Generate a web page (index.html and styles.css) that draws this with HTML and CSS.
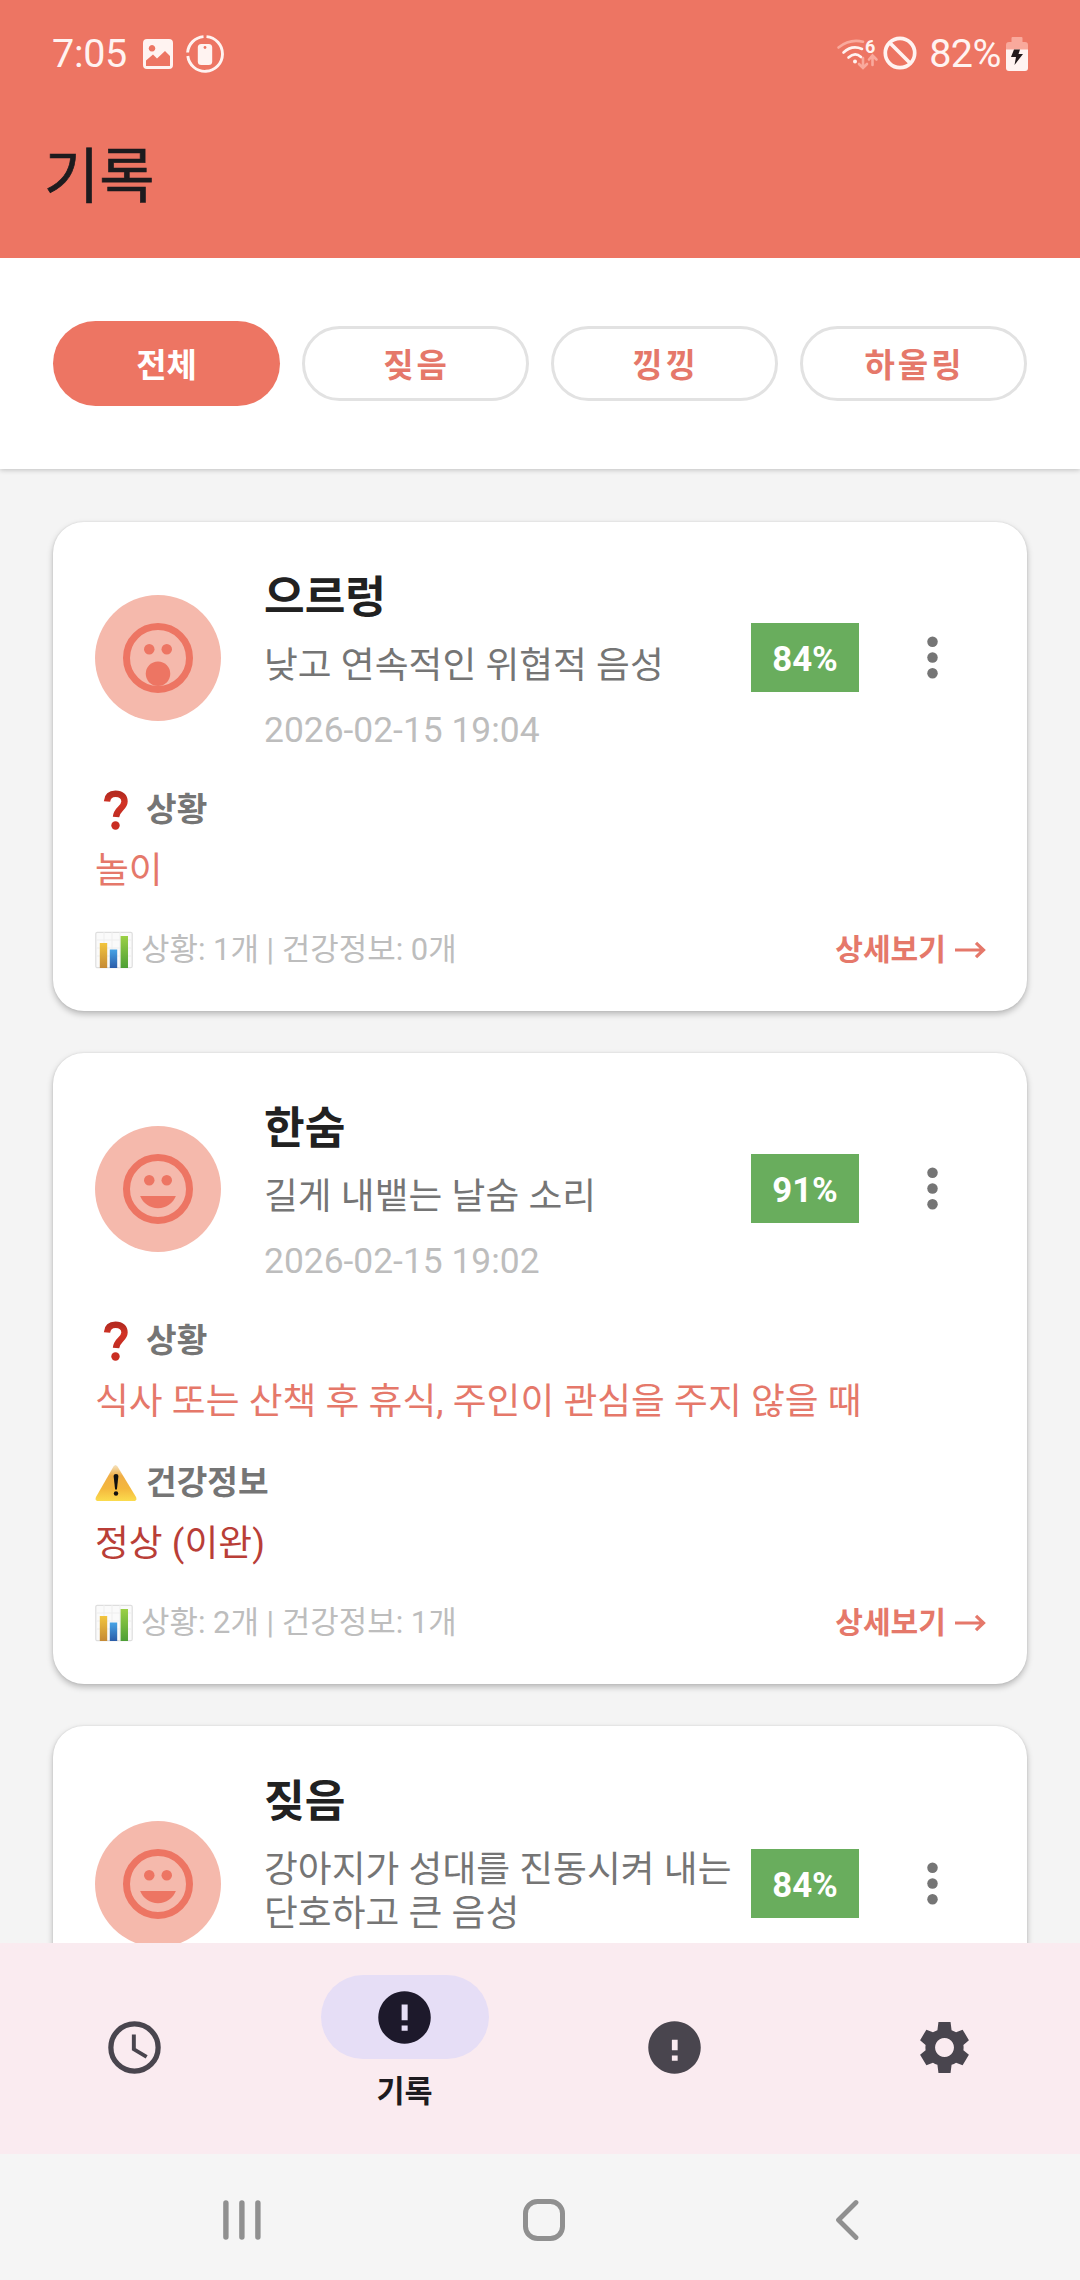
FILE: index.html
```html
<!DOCTYPE html>
<html lang="ko">
<head>
<meta charset="utf-8">
<title>기록</title>
<link rel="stylesheet" href="styles.css">
</head>
<body>
<svg class="defs" aria-hidden="true">
  <defs>
    <linearGradient id="g-red" x1="0" y1="0" x2="0" y2="1"><stop offset="0" stop-color="#b52a20"/><stop offset=".4" stop-color="#d33325"/><stop offset="1" stop-color="#c02c22"/></linearGradient>
    <linearGradient id="g-warn" x1="0" y1="0" x2="0" y2="1"><stop offset="0" stop-color="#f5e3c0"/><stop offset=".3" stop-color="#f0ae45"/><stop offset=".65" stop-color="#f4b73d"/><stop offset="1" stop-color="#fbdc4e"/></linearGradient>
    <linearGradient id="g-gold" x1="0" y1="0" x2="0" y2="1"><stop offset="0" stop-color="#f2c53d"/><stop offset="1" stop-color="#c58a35"/></linearGradient>
    <linearGradient id="g-blue" x1="0" y1="0" x2="0" y2="1"><stop offset="0" stop-color="#45a3e6"/><stop offset="1" stop-color="#2a5ca8"/></linearGradient>
    <linearGradient id="g-green" x1="0" y1="0" x2="0" y2="1"><stop offset="0" stop-color="#9bd045"/><stop offset="1" stop-color="#4d9f35"/></linearGradient>
    <symbol id="question" viewBox="0 0 42 42"><path d="M12 12.500C12.500 7 16 4.800 20.500 4.800c6 0 9 3.200 9 7.700 0 6.500-8 7.500-8.500 15.500" fill="none" stroke="url(#g-red)" stroke-width="6.400"/><circle cx="20.500" cy="36.500" r="4.200" fill="#c92d22"/></symbol>
    <symbol id="warning" viewBox="0 0 42 42"><path d="M18.500 4.500q2-3 4 0L41 35q1.500 4-2.500 4h-35Q-.5 39 1 35z" fill="url(#g-warn)"/><path d="M18.600 14q0-2 2.400-2t2.400 2l-1.500 13.500h-1.800z" fill="#111"/><circle cx="21" cy="31.500" r="2.200" fill="#111"/></symbol>
    <symbol id="chart" viewBox="0 0 38 38"><rect x=".8" y="1.300" width="36.400" height="35.400" rx="1.500" fill="#fafafa" stroke="#dedede" stroke-width="1.200"/><path d="M1 9h36M1 17h36M1 25h36M9 1v36M17 1v36M25 1v36" stroke="#eee"/><path d="M4.800 12h7.400v25H4.800z" fill="url(#g-gold)"/><path d="M14.800 18.500h7.400V37h-7.400z" fill="url(#g-blue)"/><path d="M25.600 5H33v32h-7.400z" fill="url(#g-green)"/></symbol>
    <symbol id="face-open" viewBox="0 0 24 24"><circle cx="12" cy="12" r="9" fill="none" stroke="currentColor" stroke-width="2"/><circle cx="9.500" cy="9.500" r="1.500"/><circle cx="14.500" cy="9.500" r="1.500"/><circle cx="12" cy="16.500" r="3.500"/></symbol>
    <symbol id="face-smile" viewBox="0 0 24 24"><circle cx="12" cy="12" r="9" fill="none" stroke="currentColor" stroke-width="2"/><circle cx="9.500" cy="9.500" r="1.500"/><circle cx="14.500" cy="9.500" r="1.500"/><path d="M12 17.500c2.330 0 4.310-1.460 5.110-3.500H6.890c.8 2.040 2.780 3.500 5.110 3.500z"/></symbol>
    <symbol id="more" viewBox="0 0 24 24"><circle cx="12" cy="6" r="2"/><circle cx="12" cy="12" r="2"/><circle cx="12" cy="18" r="2"/></symbol>
  </defs>
</svg>
<div class="screen">
  <header class="top">
    <div class="status">
      <div class="status-left">
        <span class="time">7:05</span>
        <svg class="s-image" width="30" height="30" viewBox="0 0 30 30"><path fill="#fff3f1" fill-rule="evenodd" d="M4 0h22a4 4 0 0 1 4 4v22a4 4 0 0 1-4 4H4a4 4 0 0 1-4-4V4a4 4 0 0 1 4-4zm5 6a3.300 3.300 0 1 0 .01 0zM3 27h24V17l-5-5-8 7.500-4-4-7 6z"/></svg>
        <svg width="38" height="38" viewBox="0 0 38 38"><g fill="none" stroke="#fff3f1" stroke-width="2.900"><path d="M20.500 1.600A17.400 17.400 0 1 1 1.800 21"/><path d="M1.600 17.500A17.400 17.400 0 0 1 17.500 1.600"/></g><rect x="11.800" y="9" width="14.400" height="21" rx="3.500" fill="#fff3f1"/><circle cx="19" cy="12.500" r="1.400" fill="#ed7563"/></svg>
      </div>
      <div class="status-right">
        <svg class="s-wifi" width="41" height="32" viewBox="0 0 41 32"><g fill="none" stroke="#fff3f1" stroke-width="2.600" stroke-linecap="round"><path d="M1.500 9.500Q13 .5 26 3.800" stroke="#f9a99c"/><path d="M6.500 14.500Q15 6.500 25 11"/><path d="M11.500 19.500Q18 13.500 24 19"/><path d="M26 20v9.500m-4-3.500 4 4 4-4" stroke="#f9a99c"/><path d="M35.500 27v-9m-3.500 3.500 3.500-4 4 4" stroke="#f9a99c"/></g><circle cx="18" cy="23.500" r="2" fill="#fff3f1"/><text x="28" y="15" class="wifi-gen">6</text></svg>
        <svg class="s-ban" width="34" height="34" viewBox="0 0 34 34"><g fill="none" stroke="#fff3f1" stroke-width="3.700"><circle cx="17" cy="17" r="14.700"/><path d="m6.500 6.500 21 21"/></g></svg>
        <span class="percent">82%</span>
        <svg width="22" height="34" viewBox="0 0 22 34"><path fill="#f9a99c" d="M6.500 0h9q1 0 1 1v4H19q3 0 3 3v5H0V8q0-3 3-3h2.500V1q0-1 1-1z"/><path fill="#fff3f1" d="M0 12.500h22V31q0 3-3 3H3q-3 0-3-3z"/><path fill="#221a1c" d="m8 12.500 6 0-1.500 4.500H17l-8.500 11 1.500-8H5z"/></svg>
      </div>
    </div>
    <h1 class="title">기록</h1>
  </header>

  <nav class="filters">
    <span class="chip chip-on">전체</span>
    <span class="chip">짖음</span>
    <span class="chip">낑낑</span>
    <span class="chip">하울링</span>
  </nav>

  <main class="list">
    <article class="card">
      <div class="head">
        <span class="avatar"><svg width="84" height="84"><use href="#face-open"/></svg></span>
        <div class="info">
          <h2 class="name">으르렁</h2>
          <p class="desc">낮고 연속적인 위협적 음성</p>
          <p class="date">2026-02-15 19:04</p>
        </div>
        <span class="score">84%</span>
        <svg class="more" width="63" height="63"><use href="#more"/></svg>
      </div>
      <section class="block">
        <h3 class="label"><svg width="42" height="42"><use href="#question"/></svg>상황</h3>
        <p class="value">놀이</p>
      </section>
      <footer class="foot">
        <span class="stats"><svg width="38" height="38"><use href="#chart"/></svg>상황: 1개 | 건강정보: 0개</span>
        <span class="detail">상세보기 <svg width="31" height="18" viewBox="0 0 31 18"><path d="M0 9h28M21 1.800 28.500 9 21 16.200"/></svg></span>
      </footer>
    </article>

    <article class="card">
      <div class="head">
        <span class="avatar"><svg width="84" height="84"><use href="#face-smile"/></svg></span>
        <div class="info">
          <h2 class="name">한숨</h2>
          <p class="desc">길게 내뱉는 날숨 소리</p>
          <p class="date">2026-02-15 19:02</p>
        </div>
        <span class="score">91%</span>
        <svg class="more" width="63" height="63"><use href="#more"/></svg>
      </div>
      <section class="block">
        <h3 class="label"><svg width="42" height="42"><use href="#question"/></svg>상황</h3>
        <p class="value">식사 또는 산책 후 휴식, 주인이 관심을 주지 않을 때</p>
      </section>
      <section class="block">
        <h3 class="label"><svg width="42" height="42"><use href="#warning"/></svg>건강정보</h3>
        <p class="value value-health">정상 (이완)</p>
      </section>
      <footer class="foot">
        <span class="stats"><svg width="38" height="38"><use href="#chart"/></svg>상황: 2개 | 건강정보: 1개</span>
        <span class="detail">상세보기 <svg width="31" height="18" viewBox="0 0 31 18"><path d="M0 9h28M21 1.800 28.500 9 21 16.200"/></svg></span>
      </footer>
    </article>

    <article class="card">
      <div class="head">
        <span class="avatar"><svg width="84" height="84"><use href="#face-smile"/></svg></span>
        <div class="info">
          <h2 class="name">짖음</h2>
          <p class="desc">강아지가 성대를 진동시켜 내는<br>단호하고 큰 음성</p>
          <p class="date">&nbsp;</p>
        </div>
        <span class="score">84%</span>
        <svg class="more" width="63" height="63"><use href="#more"/></svg>
      </div>
    </article>
  </main>

  <nav class="tabs">
    <a class="tab"><svg width="63" height="63" viewBox="0 0 24 24"><circle cx="12" cy="12" r="9" fill="none" stroke="currentColor" stroke-width="2"/><path d="M12.500 7H11v6l5.250 3.150.75-1.230-4.500-2.670z"/></svg></a>
    <a class="tab tab-on"><span class="pill"><svg width="63" height="63" viewBox="0 0 24 24"><path fill-rule="evenodd" d="M12 2a10 10 0 1 0 .01 0zM10.900 7h2.300v6h-2.300zm0 8h2.300v2h-2.300z"/></svg></span><span class="tab-label">기록</span></a>
    <a class="tab"><svg width="63" height="63" viewBox="0 0 24 24"><path fill-rule="evenodd" d="M12 2a10 10 0 1 0 .01 0zM11 9h2.200v4H11zm0 6h2.200v2H11z"/></svg></a>
    <a class="tab"><svg width="63" height="63" viewBox="0 0 24 24"><path fill-rule="evenodd" d="M9.700 2.300h4.600l.4 3.100q.9.300 1.700.8l2.500-1 2.400 4-2.100 1.800a7 7 0 0 1 0 2l2.100 1.800-2.400 4-2.500-1q-.8.500-1.700.8l-.4 3.100H9.700l-.4-3.100q-.9-.3-1.700-.8l-2.500 1-2.400-4L4.800 13a7 7 0 0 1 0-2L2.700 9.200l2.400-4 2.500 1q.8-.5 1.700-.8zM12 8.400a3.600 3.600 0 1 0 .01 0z"/></svg></a>
  </nav>

  <div class="system">
    <svg width="38" height="42" viewBox="0 0 38 42"><path d="M2.900 4v34M18.900 4v34M34.900 4v34" stroke-width="5.400"/></svg>
    <svg class="home" width="42" height="42" viewBox="0 0 42 42"><rect x="2.500" y="2.500" width="37" height="37" rx="12" stroke-width="5"/></svg>
    <svg width="24" height="42" viewBox="0 0 24 42"><path d="M21 3.500 3.500 21 21 38.500" stroke-width="4.800"/></svg>
  </div>
</div>
</body>
</html>
```
FILE: styles.css
```css
* { box-sizing: border-box; margin: 0; }

body {
  width: 1080px;
  height: 2280px;
  overflow: hidden;
  font-family: Roboto, "Noto Sans CJK KR", sans-serif;
  color: #212121;
}

svg { flex: none; }
.defs { position: absolute; width: 0; height: 0; }

.screen {
  display: flex;
  flex-direction: column;
  height: 2280px;
  background: #f4f4f4;
}

/* Status bar and app bar */
.top { height: 258px; flex: none; background: #ed7563; z-index: 2; }
.status {
  display: flex;
  justify-content: space-between;
  align-items: center;
  height: 108px;
  padding: 0 52px;
  color: #fff3f1;
}
.status-left, .status-right { display: flex; align-items: center; }
.time, .percent { font-size: 39.5px; line-height: 48px; }
.s-image { margin: 0 13px 0 16px; }
.time { letter-spacing: -.3px; }
.s-wifi { overflow: visible; }
.s-ban { margin: -3px 12px 0 5px; }
.percent { margin-right: 5px; letter-spacing: -.5px; }
.wifi-gen { font: 700 18px Roboto, sans-serif; fill: #fff3f1; }
.title {
  padding-left: 44px;
  font-size: 60px;
  font-weight: 400;
  line-height: 140px;
  color: #1d1b1e;
  -webkit-text-stroke: .7px #1d1b1e;
}

/* Filter chips */
.filters {
  display: flex;
  align-items: center;
  justify-content: space-between;
  flex: none;
  height: 211px;
  padding: 0 53px;
  background: #fff;
  box-shadow: 0 1px 5px rgba(0, 0, 0, .22);
  z-index: 1;
}
.chip {
  display: flex;
  align-items: center;
  justify-content: center;
  width: 227px;
  height: 75px;
  padding: 0 0 2px 2px;
  border: 3px solid #e2e2e2;
  border-radius: 38px;
  font-size: 33px;
  font-weight: 700;
  letter-spacing: 3px;
  color: #e5786a;
}
.chip-on {
  height: 85px;
  padding-left: 0;
  border: 0;
  border-radius: 43px;
  background: #ed7563;
  color: #fff;
  letter-spacing: 0;
}

/* Records */
.list {
  display: flex;
  flex-direction: column;
  gap: 42px;
  flex: 1 1 0;
  min-height: 0;
  overflow: hidden;
  padding: 53px 53px 0;
}
.card {
  flex: none;
  padding: 42px;
  border-radius: 31px;
  background: #fff;
  box-shadow: 0 3px 6px rgba(0, 0, 0, .25), 0 0 2px rgba(0, 0, 0, .1);
}
.head { display: flex; align-items: center; }
.avatar {
  display: flex;
  align-items: center;
  justify-content: center;
  flex: none;
  width: 126px;
  height: 126px;
  border-radius: 50%;
  background: #f5b9ac;
  color: #ed7563;
  fill: #ed7563;
}
.info { width: 487px; flex: none; margin: 0 0 0 43px; white-space: nowrap; }
.name { font-size: 44.2px; font-weight: 700; line-height: 68px; }
.desc {
  margin-top: 12px;
  font-size: 36.75px;
  line-height: 44px;
  letter-spacing: .04px;
  color: #757575;
}
.date {
  margin-top: 21px;
  font-size: 35.4px;
  line-height: 43px;
  color: #bdbdbd;
}
.score {
  display: flex;
  align-items: center;
  justify-content: center;
  width: 108px;
  height: 69px;
  margin-bottom: 2px;
  padding-top: 3px;
  background: #69ad5d;
  color: #fff;
  font-size: 34.8px;
  font-weight: 700;
}
.more { margin: 0 0 2px 42px; fill: #757575; }

.block { margin-top: 37px; }
.label {
  display: flex;
  align-items: center;
  gap: 9px;
  font-size: 33.3px;
  font-weight: 700;
  line-height: 42px;
  color: #757575;
}
.value {
  margin-top: 18px;
  font-size: 36.75px;
  line-height: 44px;
  letter-spacing: .04px;
  color: #e5786a;
}
.block + .block { margin-top: 38px; }
.value-health { color: #b93e37; }

.foot {
  display: flex;
  align-items: center;
  justify-content: space-between;
  margin: 37px -1px -1px 0;
  height: 40px;
  font-size: 30.95px;
  line-height: 40px;
}
.stats { display: flex; align-items: center; gap: 8px; color: #bdbdbd; }
.detail { display: flex; align-items: center; gap: 9px; font-size: 30.1px; font-weight: 700; color: #e5786a; }
.detail svg { fill: none; stroke: #e5786a; stroke-width: 3.2; }

/* Bottom tabs */
.tabs { display: flex; flex: none; height: 211px; padding-right: 1px; background: #faebf0; }
.tab {
  display: flex;
  flex-direction: column;
  align-items: center;
  justify-content: center;
  flex: 1 1 0;
  padding-bottom: 2px;
  color: #49454e;
  fill: #49454e;
}
.tab-on { justify-content: flex-start; padding-top: 32px; fill: #1d192b; color: #1d1b20; }
.pill {
  display: flex;
  align-items: center;
  justify-content: center;
  width: 168px;
  height: 84px;
  border-radius: 42px;
  background: #e6def6;
}
.tab-label { margin-top: 11px; font-size: 30.5px; font-weight: 700; line-height: 44px; }

/* System navigation */
.system {
  display: flex;
  justify-content: space-between;
  align-items: center;
  flex: none;
  height: 126px;
  padding: 6px 221px 0 223px;
  background: #f5f5f5;
}
.system svg { fill: none; stroke: #909090; stroke-linecap: round; stroke-linejoin: round; }
.system .home { margin-right: 9px; }
```
